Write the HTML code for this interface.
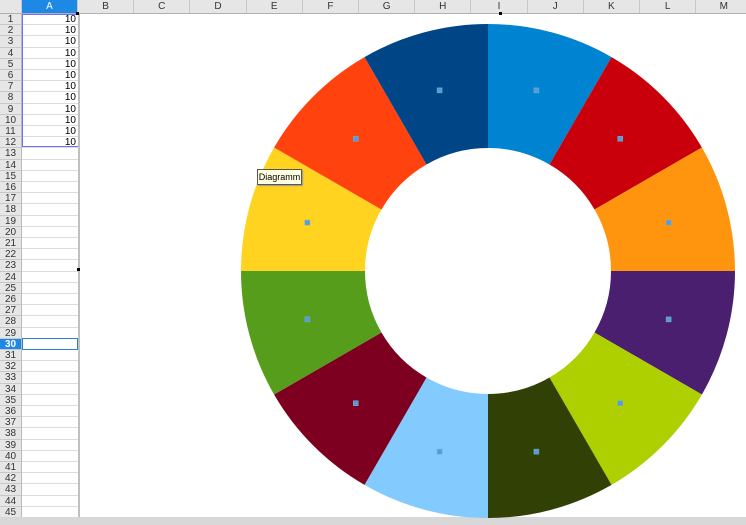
<!DOCTYPE html>
<html><head><meta charset="utf-8"><style>
body{margin:0;width:746px;height:525px;overflow:hidden;background:#fff;font-family:"Liberation Sans",sans-serif;position:relative}
.hdr{position:absolute;top:0;left:0;width:746px;height:13px;background:#e6e6e6;border-bottom:1px solid #b0b0b0}
.ch{position:absolute;top:0;height:13px;font-size:10px;line-height:13px;text-align:center;color:#333;border-right:1px solid #c8c8c8;box-sizing:border-box}
.rn{position:absolute;left:0;width:22px;font-size:10px;color:#333;background:#e6e6e6;text-align:center;box-sizing:border-box;border-bottom:1px solid #c8c8c8;border-right:1px solid #b8b8b8}
.cell{position:absolute;left:22px;width:56px;font-size:10px;text-align:right;box-sizing:border-box;border-bottom:1px solid #dcdcdc;padding-right:2px;color:#000}
</style></head><body>
<div class="hdr"></div>
<div id="g"></div>
<div style="position:absolute;left:22px;top:14px;width:57px;height:133px;border:1px solid #7070ff;box-sizing:border-box"></div>
<div style="position:absolute;left:22px;top:338px;width:56px;height:12px;border:1px solid #2a7fd6;box-sizing:border-box"></div>
<div style="position:absolute;left:78px;top:14px;width:2px;height:503px;background:#c0c0c0"></div>
<div style="position:absolute;left:0;top:517px;width:746px;height:8px;background:#d8d8d8"></div>
<svg style="position:absolute;left:0;top:0" width="746" height="525" id="s"></svg>
<div style="position:absolute;left:257px;top:169px;width:45px;height:16px;background:#ffffe1;border:1px solid #555;box-sizing:border-box;font-size:9px;line-height:14px;text-align:center;box-shadow:1px 1px 1px #999">Diagramm</div>
<script>
var g=document.getElementById('g'),h='';
var cols='ABCDEFGHIJKLM'.split('');
h+='<div class="ch" style="left:0;width:22px"></div>';
h+='<div class="ch" style="left:22px;width:56px;background:#1e88e5;color:#fff">A</div>';
for(var i=1;i<cols.length;i++){var l=78+(i-1)*56.2;h+='<div class="ch" style="left:'+l+'px;width:56.2px">'+cols[i]+'</div>';}
var rh=11.2;
for(var r=1;r<=45;r++){var t=14+(r-1)*rh;
var sel=r==30;
h+='<div class="rn" style="top:'+t+'px;height:'+rh+'px;line-height:'+rh+'px;'+(sel?'background:#1e88e5;color:#fff;font-weight:bold':'')+'">'+r+'</div>';
h+='<div class="cell" style="top:'+t+'px;height:'+rh+'px;line-height:'+rh+'px">'+(r<=12?'10':'')+'</div>';}
g.innerHTML=h;
var c=['#0083d1','#c9000b','#ff950e','#4b1f6f','#aecf00','#314004','#83caff','#7e0021','#579d1c','#ffd320','#ff420e','#004586'];
var cx=488,cy=271,R=247,r0=123,s='';
function p(a,rr){return (cx+rr*Math.cos(a)).toFixed(2)+','+(cy+rr*Math.sin(a)).toFixed(2);}
for(var k=0;k<12;k++){var a1=(-90+30*k)*Math.PI/180,a2=(-60+30*k)*Math.PI/180;
s+='<path fill="'+c[k]+'" d="M'+p(a1,r0)+' L'+p(a1,R)+' A'+R+','+R+' 0 0 1 '+p(a2,R)+' L'+p(a2,r0)+' A'+r0+','+r0+' 0 0 0 '+p(a1,r0)+'Z"/>';
var am=(a1+a2)/2,mx=cx+187*Math.cos(am),my=cy+187*Math.sin(am);
s+='<rect x="'+(mx-2.5)+'" y="'+(my-2.5)+'" width="5" height="5" fill="#4f9fe0" stroke="#8ab" stroke-width="0.5"/>';}
s+='<rect x="499" y="12" width="3" height="3" fill="#000"/><rect x="77" y="268" width="3" height="3" fill="#000"/><rect x="76" y="12" width="3" height="3" fill="#000"/>';
document.getElementById('s').innerHTML=s;
</script>
</body></html>
